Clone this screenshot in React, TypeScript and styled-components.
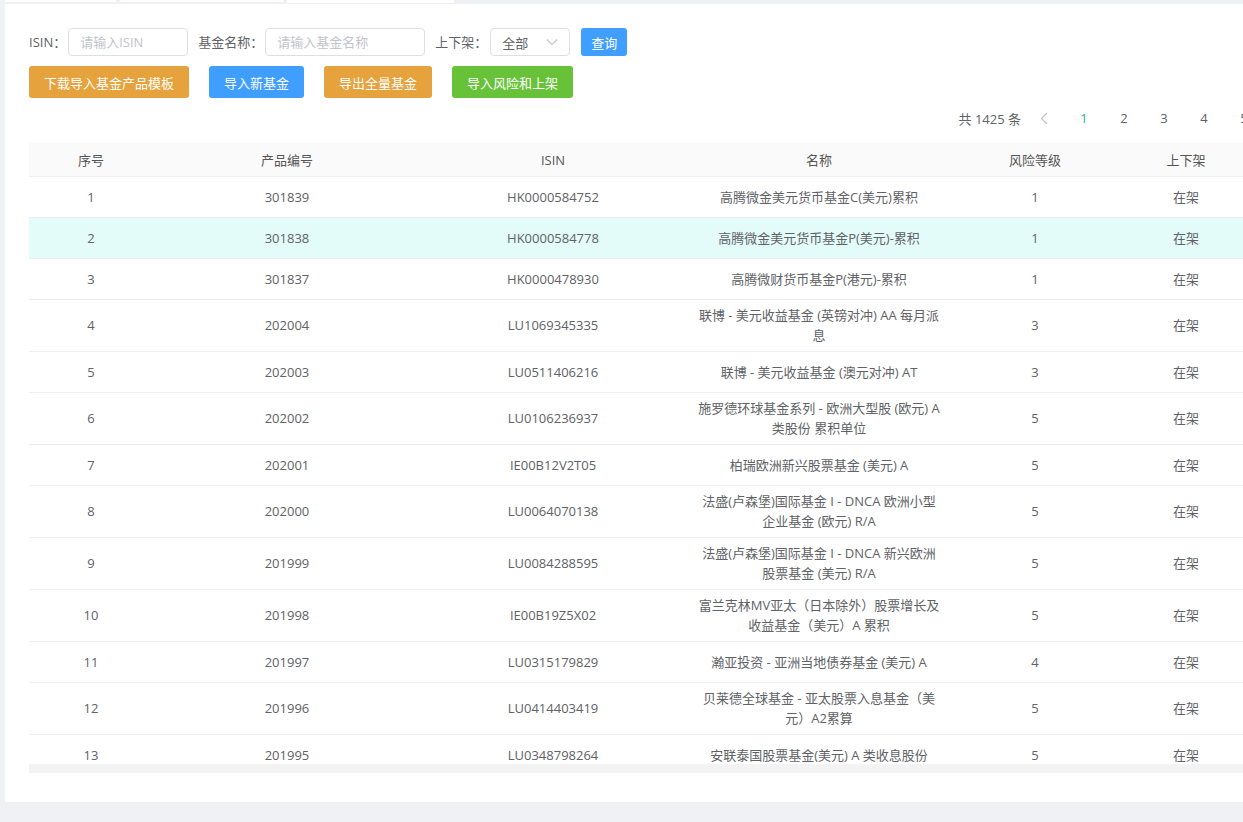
import React from 'react';
import styled, { createGlobalStyle } from 'styled-components';

const GlobalStyle = createGlobalStyle`
  html, body {
    margin: 0;
    padding: 0;
    height: 100%;
    overflow: hidden;
    background: #f0f1f5;
  }
  body {
    font-family: "Open Sans", "Noto Sans CJK SC", sans-serif;
    font-size: 13px;
    color: #606266;
  }
  * { box-sizing: border-box; }
`;

const Page = styled.div({
  width: 1500,
  minHeight: 822,
  background: '#f0f1f5',
});

const TabBar = styled.div({
  height: 3,
  display: 'flex',
  alignItems: 'flex-start',
  gap: 4,
  paddingLeft: 5,
});

const Tab = styled.div<{ $w: number; $active?: boolean }>(({ $w, $active }) => ({
  width: $w,
  height: $active ? 3 : 2,
  background: '#fff',
}));

const Panel = styled.div({
  marginTop: 1,
  marginLeft: 5,
  width: 1443,
  height: 798,
  background: '#fff',
  padding: '24px 24px 29px',
  display: 'flex',
  flexDirection: 'column',
});

const FilterRow = styled.div({
  display: 'flex',
  alignItems: 'center',
  height: 28,
});

const Label = styled.span<{ $gap?: number; $after?: number }>(({ $gap = 0, $after = 2 }) => ({
  color: '#606266',
  lineHeight: '28px',
  marginLeft: $gap,
  marginRight: $after,
  whiteSpace: 'nowrap',
}));

const Input = styled.input<{ $w: number }>(({ $w }) => ({
  width: $w,
  height: 28,
  border: '1px solid #dcdfe6',
  borderRadius: 4,
  padding: '0 11px',
  fontFamily: 'inherit',
  fontSize: 13,
  color: '#606266',
  outline: 'none',
  '&::placeholder': { color: '#c0c4cc' },
}));

const Select = styled.div({
  width: 80,
  height: 28,
  border: '1px solid #dcdfe6',
  borderRadius: 4,
  padding: '0 11px',
  display: 'flex',
  alignItems: 'center',
  justifyContent: 'space-between',
  color: '#606266',
});

const Button = styled.button<{ $color: string; $small?: boolean }>(({ $color, $small }) => ({
  height: $small ? 28 : 32,
  padding: $small ? '0 10px' : '0 15px',
  border: 'none',
  borderRadius: 3,
  background: $color,
  color: '#fff',
  fontFamily: 'inherit',
  fontSize: 13,
  whiteSpace: 'nowrap',
  cursor: 'pointer',
}));

const SearchButton = styled(Button)({
  marginLeft: 11,
});

const ActionRow = styled.div({
  marginTop: 10,
  display: 'flex',
  gap: 20,
});

const PagerRow = styled.div({
  marginTop: 8,
  height: 24,
  display: 'flex',
  alignItems: 'center',
  justifyContent: 'flex-end',
});

const Total = styled.span({
  marginRight: 3,
  color: '#606266',
});

const PageBtn = styled.span<{ $active?: boolean; $muted?: boolean }>(({ $active, $muted }) => ({
  width: 40,
  textAlign: 'center',
  display: 'inline-flex',
  justifyContent: 'center',
  alignItems: 'center',
  color: $active ? '#19b3a8' : $muted ? '#c0c4cc' : '#606266',
}));

const TableViewport = styled.div({
  marginTop: 13,
  height: 621,
  overflow: 'hidden',
});

const Table = styled.table({
  tableLayout: 'fixed',
  borderCollapse: 'separate',
  borderSpacing: 0,
  width: 1395,
});

const Th = styled.th({
  height: 34,
  background: '#fafafa',
  borderBottom: '1px solid #ebeef5',
  fontWeight: 400,
  color: '#555',
  textAlign: 'center',
  padding: 0,
});

const Tr = styled.tr<{ $hover?: boolean }>(({ $hover }) => ({
  background: $hover ? '#e4fcf9' : '#fff',
}));

const Td = styled.td({
  height: 41,
  padding: '5px 10px 6px',
  borderBottom: '1px solid #ebeef5',
  textAlign: 'center',
  verticalAlign: 'middle',
  lineHeight: '20px',
  color: '#606266',
  whiteSpace: 'nowrap',
});

const ScrollTrack = styled.div({
  height: 9,
  background: '#f3f3f4',
  width: '100%',
});

const columns: [string, number][] = [
  ['序号', 124],
  ['产品编号', 268],
  ['ISIN', 264],
  ['名称', 268],
  ['风险等级', 164],
  ['上下架', 138],
  ['操作', 169],
];

type Row = [string, string, string[], string];

const rows: Row[] = [
  ['301839', 'HK0000584752', ['高腾微金美元货币基金C(美元)累积'], '1'],
  ['301838', 'HK0000584778', ['高腾微金美元货币基金P(美元)-累积'], '1'],
  ['301837', 'HK0000478930', ['高腾微财货币基金P(港元)-累积'], '1'],
  ['202004', 'LU1069345335', ['联博 - 美元收益基金 (英镑对冲) AA 每月派', '息'], '3'],
  ['202003', 'LU0511406216', ['联博 - 美元收益基金 (澳元对冲) AT'], '3'],
  ['202002', 'LU0106236937', ['施罗德环球基金系列 - 欧洲大型股 (欧元) A', '类股份 累积单位'], '5'],
  ['202001', 'IE00B12V2T05', ['柏瑞欧洲新兴股票基金 (美元) A'], '5'],
  ['202000', 'LU0064070138', ['法盛(卢森堡)国际基金 I - DNCA 欧洲小型', '企业基金 (欧元) R/A'], '5'],
  ['201999', 'LU0084288595', ['法盛(卢森堡)国际基金 I - DNCA 新兴欧洲', '股票基金 (美元) R/A'], '5'],
  ['201998', 'IE00B19Z5X02', ['富兰克林MV亚太（日本除外）股票增长及', '收益基金（美元）A 累积'], '5'],
  ['201997', 'LU0315179829', ['瀚亚投资 - 亚洲当地债券基金 (美元) A'], '4'],
  ['201996', 'LU0414403419', ['贝莱德全球基金 - 亚太股票入息基金（美', '元）A2累算'], '5'],
  ['201995', 'LU0348798264', ['安联泰国股票基金(美元) A 类收息股份'], '5'],
];

const ChevronDown = () => (
  <svg width="12" height="8" viewBox="0 0 12 8" fill="none">
    <polyline points="1,1.5 6,6.5 11,1.5" stroke="#c0c4cc" strokeWidth="1.1" />
  </svg>
);

const ChevronLeft = () => (
  <svg width="8" height="13" viewBox="0 0 8 13" fill="none">
    <polyline points="7,1 1.5,6.5 7,12" stroke="#c0c4cc" strokeWidth="1.2" />
  </svg>
);

const ChevronRight = () => (
  <svg width="8" height="13" viewBox="0 0 8 13" fill="none">
    <polyline points="1,1 6.5,6.5 1,12" stroke="#606266" strokeWidth="1.2" />
  </svg>
);

export default function App() {
  return (
    <Page>
      <GlobalStyle />
      <TabBar>
        <Tab $w={111} />
        <Tab $w={163} />
        <Tab $w={167} $active />
      </TabBar>
      <Panel>
        <FilterRow>
          <Label>ISIN：</Label>
          <Input $w={120} placeholder="请输入ISIN" />
          <Label $gap={10}>基金名称：</Label>
          <Input $w={160} placeholder="请输入基金名称" />
          <Label $gap={10} $after={3}>
            上下架：
          </Label>
          <Select>
            <span>全部</span>
            <ChevronDown />
          </Select>
          <SearchButton $color="#409eff" $small>
            查询
          </SearchButton>
        </FilterRow>
        <ActionRow>
          <Button $color="#e6a23c">下载导入基金产品模板</Button>
          <Button $color="#409eff">导入新基金</Button>
          <Button $color="#e6a23c">导出全量基金</Button>
          <Button $color="#67c23a">导入风险和上架</Button>
        </ActionRow>
        <PagerRow>
          <Total>共 1425 条</Total>
          <PageBtn $muted>
            <ChevronLeft />
          </PageBtn>
          <PageBtn $active>1</PageBtn>
          <PageBtn>2</PageBtn>
          <PageBtn>3</PageBtn>
          <PageBtn>4</PageBtn>
          <PageBtn>5</PageBtn>
          <PageBtn>6</PageBtn>
          <PageBtn>···</PageBtn>
          <PageBtn>143</PageBtn>
          <PageBtn>
            <ChevronRight />
          </PageBtn>
        </PagerRow>
        <TableViewport>
          <Table>
            <colgroup>
              {columns.map(([name, w]) => (
                <col key={name} style={{ width: w }} />
              ))}
            </colgroup>
            <thead>
              <tr>
                {columns.map(([name]) => (
                  <Th key={name}>{name}</Th>
                ))}
              </tr>
            </thead>
            <tbody>
              {rows.map(([code, isin, name, risk], i) => (
                <Tr key={code} $hover={i === 1}>
                  <Td>{i + 1}</Td>
                  <Td>{code}</Td>
                  <Td>{isin}</Td>
                  <Td>
                    {name.map((line, j) => (
                      <React.Fragment key={j}>
                        {j > 0 && <br />}
                        {line}
                      </React.Fragment>
                    ))}
                  </Td>
                  <Td>{risk}</Td>
                  <Td>在架</Td>
                  <Td>编辑</Td>
                </Tr>
              ))}
            </tbody>
          </Table>
        </TableViewport>
        <ScrollTrack />
      </Panel>
    </Page>
  );
}
